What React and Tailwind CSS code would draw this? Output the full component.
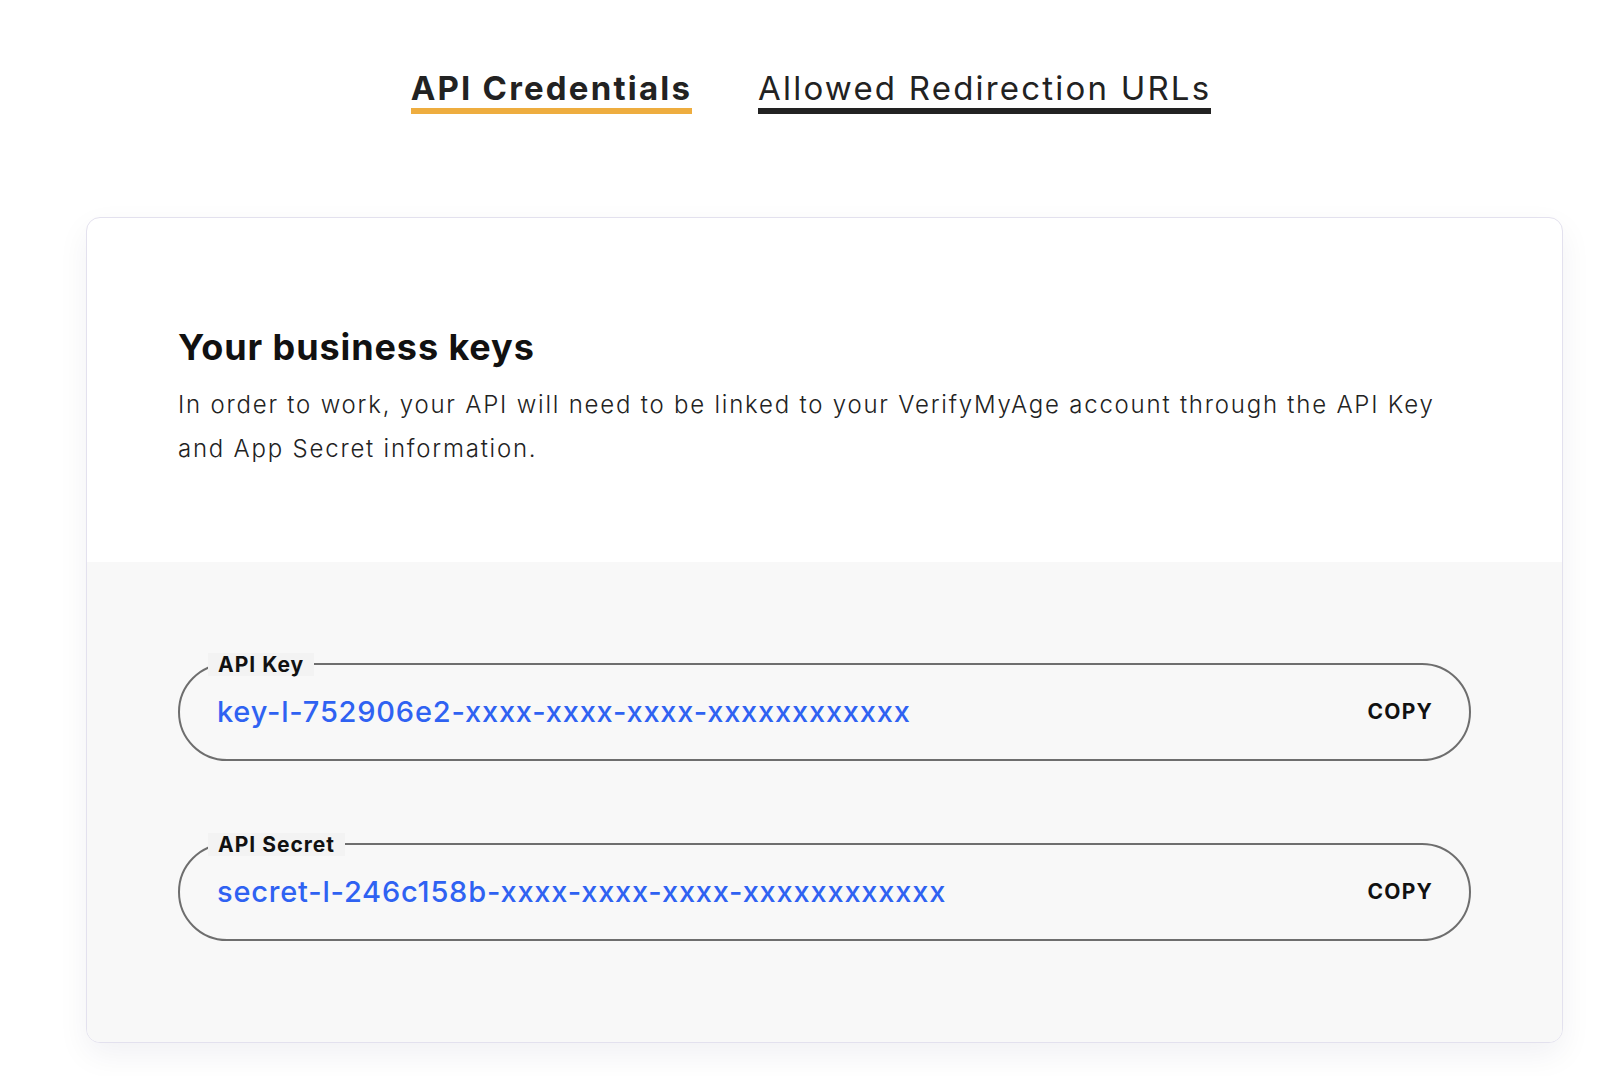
export default function App() {
  const font = { fontFamily: "Inter, 'Noto Sans', sans-serif" };
  return (
    <div className="min-h-[1076px] bg-white text-[#222222]" style={font}>
      <div className="flex justify-center gap-[66px] pl-[6px] pt-[68px]">
        <div className="border-b-[6px] border-[#eead3f] text-[33px] font-bold leading-[40px] tracking-[2.2px]">
          API Credentials
        </div>
        <div className="border-b-[6px] border-[#222222] text-[33px] font-normal leading-[40px] tracking-[2.2px]">
          Allowed Redirection URLs
        </div>
      </div>

      <div className="ml-[86px] mr-[53px] mt-[103px] overflow-hidden rounded-[14px] border border-[#e3e1ee] bg-white shadow-[0_12px_32px_rgba(20,20,60,0.06)]">
        <div className="px-[91px] pt-[107px] pb-[91px]">
          <h2 className="text-[36px] font-bold leading-[44px] tracking-[0.9px] text-[#111111]">
            Your business keys
          </h2>
          <p className="mt-[14px] whitespace-nowrap text-[24px] font-light leading-[44px] tracking-[1.78px] text-[#222222]">
            In order to work, your API will need to be linked to your VerifyMyAge account through the API Key
            <br />
            and App Secret information.
          </p>
        </div>
        <div className="flex flex-col gap-[82px] bg-[#f8f8f8] px-[91px] py-[101px]">
          <KeyField label="API Key" value="key-l-752906e2-xxxx-xxxx-xxxx-xxxxxxxxxxxx" />
          <KeyField label="API Secret" value="secret-l-246c158b-xxxx-xxxx-xxxx-xxxxxxxxxxxx" />
        </div>
      </div>
    </div>
  );
}

function KeyField({ label, value }) {
  return (
    <div className="relative flex h-[98px] items-center justify-between rounded-full border-2 border-[#6e6e6e] pl-[37px] pr-[36px]">
      <div className="absolute left-[28px] top-[-12px] bg-[#f3f3f3] px-[10px] text-[21px] font-bold leading-[23px] tracking-[1px] text-[#111111]">
        {label}
      </div>
      <span className="text-[29px] font-medium tracking-[0.8px] text-[#2f62f2]">{value}</span>
      <button className="text-[21px] font-bold tracking-[1.2px] text-[#111111]">COPY</button>
    </div>
  );
}
